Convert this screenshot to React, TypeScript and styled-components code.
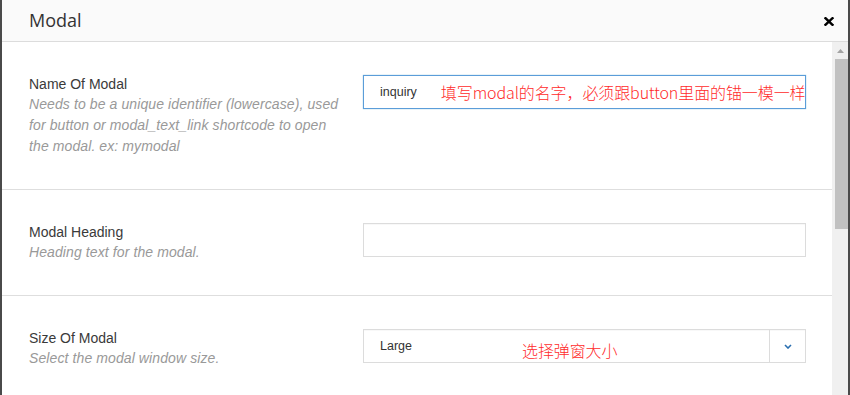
import React from "react";
import styled, { createGlobalStyle } from "styled-components";

const Global = createGlobalStyle`
  html, body { margin: 0; padding: 0; background: #fff; }
  #root { width: 850px; height: 395px; overflow: hidden; }
`;

const Frame = styled.div`
  box-sizing: border-box;
  width: 850px;
  height: 395px;
  border-left: 2px solid #4a4a4a;
  border-right: 2px solid #4a4a4a;
  display: flex;
  flex-direction: column;
  overflow: hidden;
  background: #fff;
`;

const Header = styled.div`
  height: 41px;
  flex: none;
  background: #fafafa;
  border-bottom: 1px solid #dcdcdc;
  display: flex;
  align-items: center;
  justify-content: space-between;
  padding: 0 14px 0 27px;
`;

const Title = styled.h1`
  margin: 0;
  font-family: "Open Sans", sans-serif;
  font-weight: 400;
  font-size: 18px;
  line-height: 24px;
  color: #333;
  margin-top: -1px;
`;

const Close = styled.button`
  border: 0;
  background: none;
  padding: 0;
  width: 10px;
  height: 9px;
  display: flex;
  margin-top: 1px;
`;

const Main = styled.div`
  flex: 1;
  display: flex;
  min-height: 0;
`;

const Body = styled.div`
  flex: 1;
  display: flex;
  flex-direction: column;
`;

const Row = styled.div`
  display: grid;
  grid-template-columns: 312px 1fr;
  column-gap: 22px;
  align-items: start;
  padding: 32px 26px 32px 27px;
  border-bottom: 1px solid #dedede;
`;

const LabelCol = styled.div`
  font-family: "Liberation Sans", Arial, sans-serif;
`;

const Label = styled.div`
  font-size: 14px;
  line-height: 20px;
  color: #3a3a3a;
`;

const Desc = styled.div`
  font-size: 14px;
  line-height: 21px;
  font-style: italic;
  letter-spacing: 0.1px;
  color: #999;
`;

const Field = styled.div<{ $focus?: boolean }>`
  box-sizing: border-box;
  height: 34px;
  margin-top: 1px;
  border: 1px solid ${(p) => (p.$focus ? "#5b9dd9" : "#dcdcdc")};
  box-shadow: ${(p) => (p.$focus ? "0 0 1px rgba(30,140,190,.6)" : "inset 0 1px 1px rgba(0,0,0,.03)")};
  background: #fff;
  display: flex;
  align-items: center;
  padding-left: 16px;
  font-family: "Liberation Sans", Arial, sans-serif;
  font-size: 12.5px;
  color: #333;
`;

const Value = styled.span`
  flex: none;
`;

const Note = styled.span<{ $offset: number; $dy?: number }>`
  margin-left: ${(p) => p.$offset}px;
  margin-top: ${(p) => p.$dy ?? 0}px;
  font-family: "Noto Sans CJK SC", "Liberation Sans", sans-serif;
  font-weight: 300;
  font-size: 16px;
  letter-spacing: -0.1px;
  color: #ff2b2b;
  white-space: nowrap;
  flex: 1;
`;

const SelectBtn = styled.div`
  align-self: stretch;
  width: 35px;
  border-left: 1px solid #dcdcdc;
  display: flex;
  align-items: center;
  justify-content: center;
`;

const Scrollbar = styled.div`
  width: 16px;
  flex: none;
  background: #f0f0f0;
  display: flex;
  flex-direction: column;
  align-items: flex-end;
`;

const ArrowBox = styled.div`
  width: 16px;
  height: 17px;
  display: flex;
  align-items: center;
  justify-content: center;
`;

const Thumb = styled.div`
  width: 13px;
  height: 170px;
  background: #c1c1c1;
`;

export default function App() {
  return (
    <>
      <Global />
      <Frame>
        <Header>
          <Title>Modal</Title>
          <Close aria-label="close">
            <svg width="10" height="9" viewBox="0 0 10 9">
              <path d="M1.5 1.2 L8.5 7.8 M8.5 1.2 L1.5 7.8" stroke="#000" strokeWidth="2.4" strokeLinecap="square" />
            </svg>
          </Close>
        </Header>
        <Main>
          <Body>
            <Row>
              <LabelCol>
                <Label>Name Of Modal</Label>
                <Desc>
                  Needs to be a unique identifier (lowercase), used for button or modal_text_link shortcode to open the modal. ex: mymodal
                </Desc>
              </LabelCol>
              <Field $focus>
                <Value>inquiry</Value>
                <Note $offset={24}>填写modal的名字，必须跟button里面的锚一模一样</Note>
              </Field>
            </Row>
            <Row>
              <LabelCol>
                <Label>Modal Heading</Label>
                <Desc>Heading text for the modal.</Desc>
              </LabelCol>
              <Field />
            </Row>
            <Row>
              <LabelCol>
                <Label>Size Of Modal</Label>
                <Desc>Select the modal window size.</Desc>
              </LabelCol>
              <Field>
                <Value>Large</Value>
                <Note $offset={110} $dy={8}>选择弹窗大小</Note>
                <SelectBtn>
                  <svg width="8" height="5" viewBox="0 0 8 5">
                    <path d="M1 1 L4 4 L7 1" stroke="#2a6fb0" strokeWidth="1.6" fill="none" />
                  </svg>
                </SelectBtn>
              </Field>
            </Row>
          </Body>
          <Scrollbar>
            <ArrowBox>
              <svg width="7" height="4" viewBox="0 0 7 4">
                <path d="M0 4 L3.5 0 L7 4 Z" fill="#a3a3a3" />
              </svg>
            </ArrowBox>
            <Thumb />
          </Scrollbar>
        </Main>
      </Frame>
    </>
  );
}
